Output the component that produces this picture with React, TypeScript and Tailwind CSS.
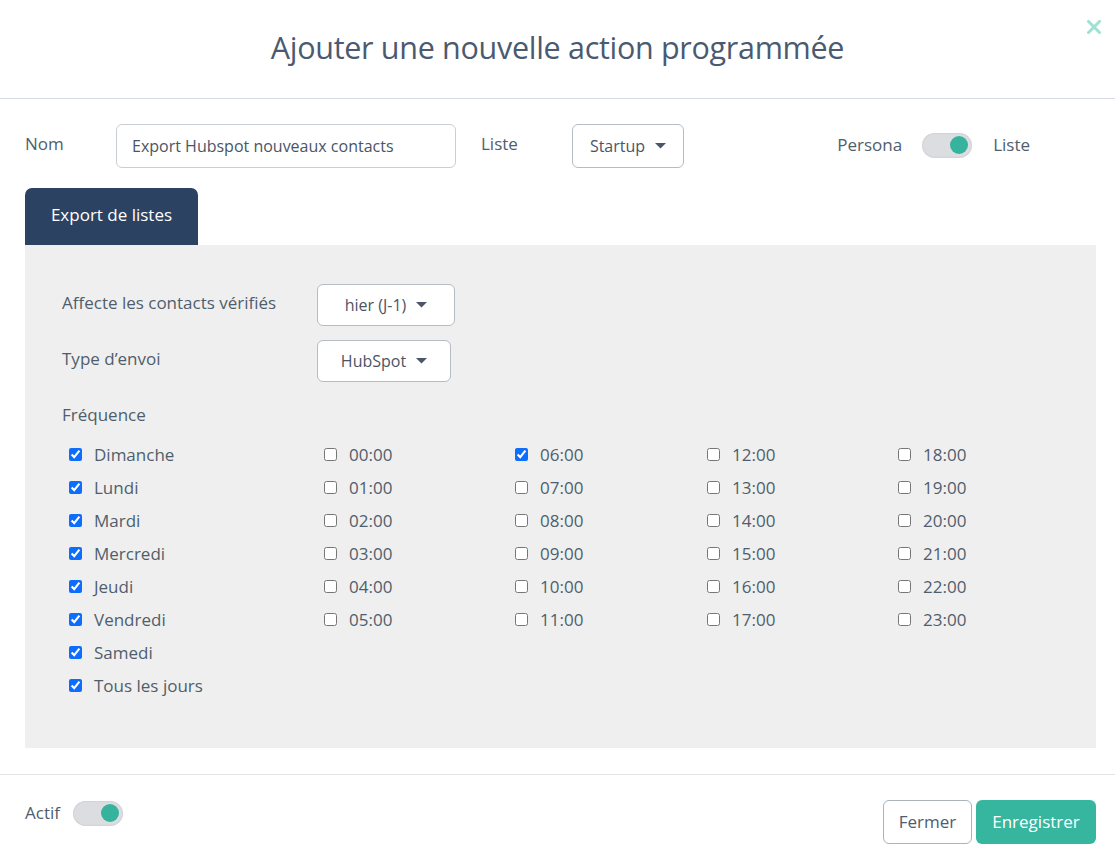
import React from "react";

const Caret = () => (
  <svg width="11" height="6" viewBox="0 0 11 6" className="ml-[10px]">
    <path d="M0 0 L11 0 L5.5 5.5 Z" fill="#4a5568" />
  </svg>
);

const Toggle = () => (
  <div className="w-[50px] h-[25px] rounded-full bg-[#dcdde1] shadow-[inset_0_0_2px_rgba(0,0,0,0.15)] flex items-center justify-end pr-[4px]">
    <div className="w-[18px] h-[18px] rounded-full bg-[#36b39d]" />
  </div>
);

const Check = ({ label, checked }: { label: string; checked?: boolean }) => (
  <label className="flex items-center h-[33px] pl-[7px]">
    <input
      type="checkbox"
      defaultChecked={checked}
      className="w-[13px] h-[13px] m-0 accent-[#0d6efd] mt-[-2px]"
    />
    <span className="ml-[12px] text-[17px] text-[#4f5e6c]">{label}</span>
  </label>
);

const days = ["Dimanche", "Lundi", "Mardi", "Mercredi", "Jeudi", "Vendredi", "Samedi", "Tous les jours"];
const hour = (h: number) => (h < 10 ? "0" + h : "" + h) + ":00";

export default function App() {
  return (
    <div className="w-[1115px] h-[862px] bg-white font-['Open_Sans',sans-serif] text-[#4f5e6c] overflow-hidden">
      <div className="relative h-[99px] border-b border-[#d5dbe0] flex items-center justify-center">
        <h1 className="text-[30.5px] text-[#4a5a70] tracking-[-0.3px] mt-[-2px]">Ajouter une nouvelle action programmée</h1>
        <svg className="absolute right-[14px] top-[20px]" width="14" height="14" viewBox="0 0 14 14">
          <path d="M1.5 1.5 L12.5 12.5 M12.5 1.5 L1.5 12.5" stroke="#9fe1d2" strokeWidth="3" strokeLinecap="square" />
        </svg>
      </div>

      <div className="pl-[25px] pr-[19px] pt-[25px]">
        <div className="flex items-center h-[44px] text-[17px]">
          <span className="w-[91px] text-[#4f5e6c] mt-[-4px]">Nom</span>
          <div className="w-[340px] h-[44px] border border-[#c9ced4] rounded-[6px] flex items-center px-[15px] text-[16px] text-[#4a5566]">
            Export Hubspot nouveaux contacts
          </div>
          <span className="ml-[25px] w-[91px] mt-[-4px]">Liste</span>
          <div className="w-[112px] h-[44px] border border-[#b5bcc4] rounded-[6px] flex items-center justify-center text-[16px] text-[#4a5566]">
            Startup
            <Caret />
          </div>
          <div className="ml-auto flex items-center mr-[66px] mt-[-2px]">
            <span>Persona</span>
            <div className="ml-[20px] mr-[21px]">
              <Toggle />
            </div>
            <span>Liste</span>
          </div>
        </div>

        <div className="mt-[20px] w-[173px] h-[57px] bg-[#2c4262] rounded-t-[7px] flex items-center justify-center text-white text-[17px] pb-[4px]">
          Export de listes
        </div>

        <div className="bg-[#efefef] h-[503px] pl-[37px] pt-[39px]">
          <div className="flex items-start">
            <span className="w-[255px] pt-[6px] text-[17px]">Affecte les contacts vérifiés</span>
            <div className="w-[138px] h-[42px] bg-white border border-[#b5bcc4] rounded-[6px] flex items-center justify-center text-[16px] text-[#4a5566]">
              hier (J-1)
              <Caret />
            </div>
          </div>
          <div className="flex items-start mt-[14px]">
            <span className="w-[255px] pt-[6px] text-[17px]">Type d’envoi</span>
            <div className="w-[134px] h-[42px] bg-white border border-[#b5bcc4] rounded-[6px] flex items-center justify-center text-[16px] text-[#4a5566]">
              HubSpot
              <Caret />
            </div>
          </div>
          <div className="mt-[20px] text-[17px]">Fréquence</div>
          <div className="grid grid-cols-[255px_191px_192px_191px_1fr] mt-[11px]">
            <div className="flex flex-col">
              {days.map((d) => (
                <Check key={d} label={d} checked />
              ))}
            </div>
            {[0, 1, 2, 3].map((c) => (
              <div key={c} className="flex flex-col">
                {[0, 1, 2, 3, 4, 5].map((r) => {
                  const h = c * 6 + r;
                  return <Check key={h} label={hour(h)} checked={h === 6} />;
                })}
              </div>
            ))}
          </div>
        </div>
      </div>

      <div className="mt-[26px] border-t border-[#e3e3e3] pl-[25px] pr-[19px] pt-[25px] flex items-start">
        <div className="flex items-center h-[26px]">
          <span className="text-[17px] mr-[13px]">Actif</span>
          <Toggle />
        </div>
        <div className="ml-auto flex gap-[4px]">
          <button className="w-[89px] h-[44px] border border-[#aab4bd] rounded-[6px] bg-white text-[17px] text-[#4d5d75]">
            Fermer
          </button>
          <button className="w-[120px] h-[44px] rounded-[6px] bg-[#36b59f] text-[17px] text-white">
            Enregistrer
          </button>
        </div>
      </div>
    </div>
  );
}
